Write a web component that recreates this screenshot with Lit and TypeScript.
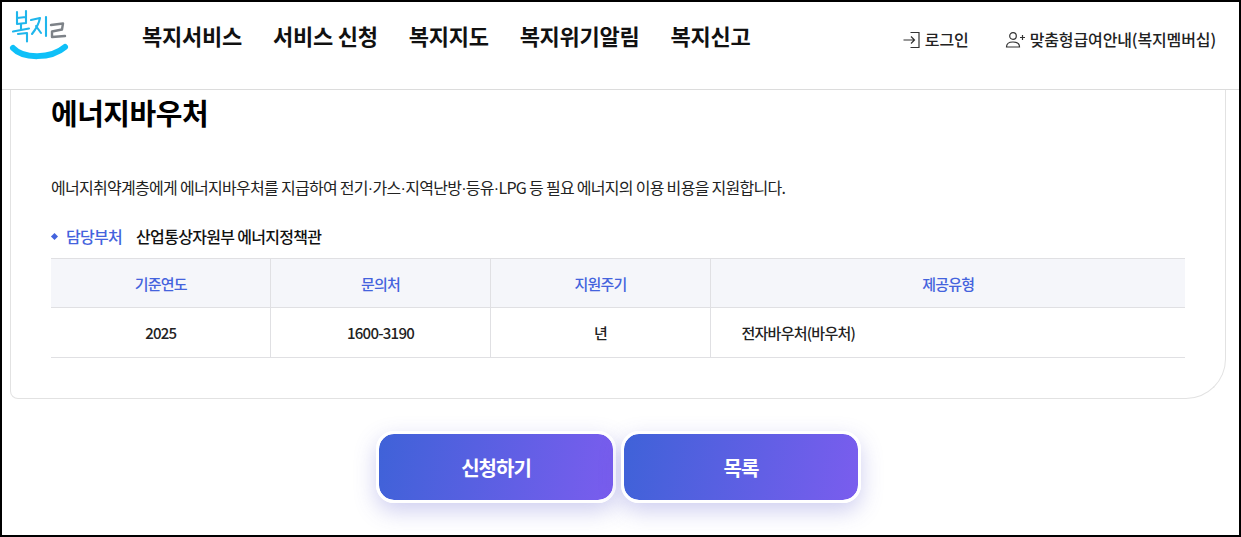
import { LitElement, html, css, svg } from 'lit';
import { customElement } from 'lit/decorators.js';

const logo = svg`
  <g fill="none" stroke-linecap="round" stroke-linejoin="round">
    <g stroke="#1fb6ec" stroke-width="2.100">
      <path d="M17 12v12M26 11v12M17 18l9-1M17 24l9-1"/>
      <path d="M21 24v5M13 31.500l16-3"/>
      <path d="M18 34l9-1v8.500"/>
      <path d="M31 20l9-2c-1 5-4 11-8 16M36 26l5 7"/>
      <path d="M46 17v19"/>
    </g>
    <path d="M51 25l12-1.500-1 6-10 2v5.500l13-1" stroke="#7d8288" stroke-width="2.400"/>
    <path d="M13 48c10 11 38 11 52-1" stroke="#0fc0f8" stroke-width="6"/>
  </g>`;

@customElement('app-root')
export class AppRoot extends LitElement {
  static styles = css`
    :host {
      display: block;
      height: 537px;
      box-sizing: border-box;
      border: 2px solid #000;
      overflow: hidden;
      background: #fff;
      color: #111;
      font-family: 'Noto Sans CJK KR', 'Noto Sans', sans-serif;
    }

    header {
      display: flex;
      align-items: flex-start;
      height: 87px;
      border-bottom: 1px solid #dcdcdc;
    }
    .logo {
      display: block;
      width: 80px;
      height: 66px;
      margin: -2px 62px 0 -2px;
    }
    nav {
      display: flex;
      gap: 31px;
      padding-top: 18px;
      flex: 1;
      font-size: 22px;
      line-height: 30px;
      font-weight: 700;
      letter-spacing: -0.25px;
    }
    .util {
      display: flex;
      align-items: center;
      gap: 36px;
      padding: 27px 23px 0 0;
      font-size: 16px;
      line-height: 21px;
      font-weight: 500;
      color: #222;
      letter-spacing: -0.12px;
    }
    .util span {
      display: flex;
      align-items: center;
      gap: 5px;
    }
    .util svg {
      display: block;
    }

    .card {
      margin: 0 13px 0 8px;
      height: 309px;
      box-sizing: border-box;
      padding: 0 40px;
      border: 1px solid #e2e2e2;
      border-top: none;
      border-radius: 0 0 40px 8px;
    }
    h1 {
      margin: 0;
      padding-top: 2px;
      font-size: 29px;
      line-height: 40px;
      font-weight: 700;
      letter-spacing: -0.5px;
      color: #000;
    }
    .desc {
      margin: 44px 0 0;
      font-size: 16px;
      line-height: 22px;
      letter-spacing: -0.71px;
      color: #222;
    }
    .desc span {
      font-family: 'Liberation Sans', sans-serif;
    }
    .dept {
      display: flex;
      align-items: center;
      margin-top: 25px;
      font-size: 16px;
      line-height: 22px;
      font-weight: 500;
      letter-spacing: -0.7px;
    }
    .dept i {
      width: 5px;
      height: 5px;
      margin: 0 9px 0 1px;
      background: #4463dd;
      transform: rotate(45deg);
    }
    .dept b {
      font-weight: 500;
      color: #4463dd;
      margin-right: 14px;
    }

    table {
      width: 1134px;
      margin-top: 11px;
      border-collapse: collapse;
      table-layout: fixed;
      font-size: 15px;
      letter-spacing: -0.75px;
    }
    th,
    td {
      padding: 0 0 0 1px;
      text-align: center;
      border-top: 1px solid #e0e0e3;
      border-bottom: 1px solid #e0e0e3;
      border-left: 1px solid #e0e0e3;
    }
    th:first-child,
    td:first-child {
      border-left: none;
    }
    th {
      height: 48px;
      font-weight: 500;
      color: #4463dd;
      background: #f5f6fa;
    }
    td {
      height: 49px;
      font-weight: 500;
      color: #222;
    }
    td.left {
      text-align: left;
      padding-left: 31px;
    }

    .actions {
      display: flex;
      justify-content: center;
      gap: 5px;
      margin-top: 32px;
      padding-right: 4px;
    }
    .btn {
      display: flex;
      align-items: center;
      justify-content: center;
      width: 240px;
      height: 72px;
      box-sizing: border-box;
      border: 3px solid #fff;
      border-radius: 18px;
      background: linear-gradient(100deg, #3f62d8, #7a5dee) padding-box;
      box-shadow: 0 8px 22px rgba(80, 80, 200, 0.28);
      color: #fff;
      font-size: 20px;
      font-weight: 700;
      letter-spacing: -1px;
    }
  `;

  render() {
    return html`
      <header>
        <svg class="logo" viewBox="0 0 80 66" aria-label="복지로">${logo}</svg>
        <nav>
          <span>복지서비스</span>
          <span>서비스 신청</span>
          <span>복지지도</span>
          <span>복지위기알림</span>
          <span>복지신고</span>
        </nav>
        <div class="util">
          <span>
            <svg width="19" height="18" viewBox="-1.500 0 19 18" fill="none" stroke="#333" stroke-width="1.200">
              <path d="M1 9h11M8.500 5.500L12 9l-3.500 3.500M8 1.500h8.500v15H8"/>
            </svg>
            로그인
          </span>
          <span>
            <svg width="20" height="18" viewBox="0 0 20 18" fill="none" stroke="#333" stroke-width="1.200">
              <circle cx="8" cy="5" r="3.300"/>
              <path d="M1.500 16c0-3.500 2.500-5 6.500-5s6.500 1.500 6.500 5zM15 6.500h5M17.500 4v5"/>
            </svg>
            맞춤형급여안내(복지멤버십)
          </span>
        </div>
      </header>
      <section class="card">
        <h1>에너지바우처</h1>
        <p class="desc">에너지취약계층에게 에너지바우처를 지급하여 전기<span>·</span>가스<span>·</span>지역난방<span>·</span>등유<span>·</span>LPG 등 필요 에너지의 이용 비용을 지원합니다.</p>
        <div class="dept"><i></i><b>담당부처</b>산업통상자원부 에너지정책관</div>
        <table>
          <colgroup>
            <col style="width:219px" />
            <col style="width:220px" />
            <col style="width:220px" />
            <col />
          </colgroup>
          <tr>
            <th>기준연도</th>
            <th>문의처</th>
            <th>지원주기</th>
            <th>제공유형</th>
          </tr>
          <tr>
            <td>2025</td>
            <td>1600-3190</td>
            <td>년</td>
            <td class="left">전자바우처(바우처)</td>
          </tr>
        </table>
      </section>
      <div class="actions">
        <div class="btn">신청하기</div>
        <div class="btn">목록</div>
      </div>
    `;
  }
}
